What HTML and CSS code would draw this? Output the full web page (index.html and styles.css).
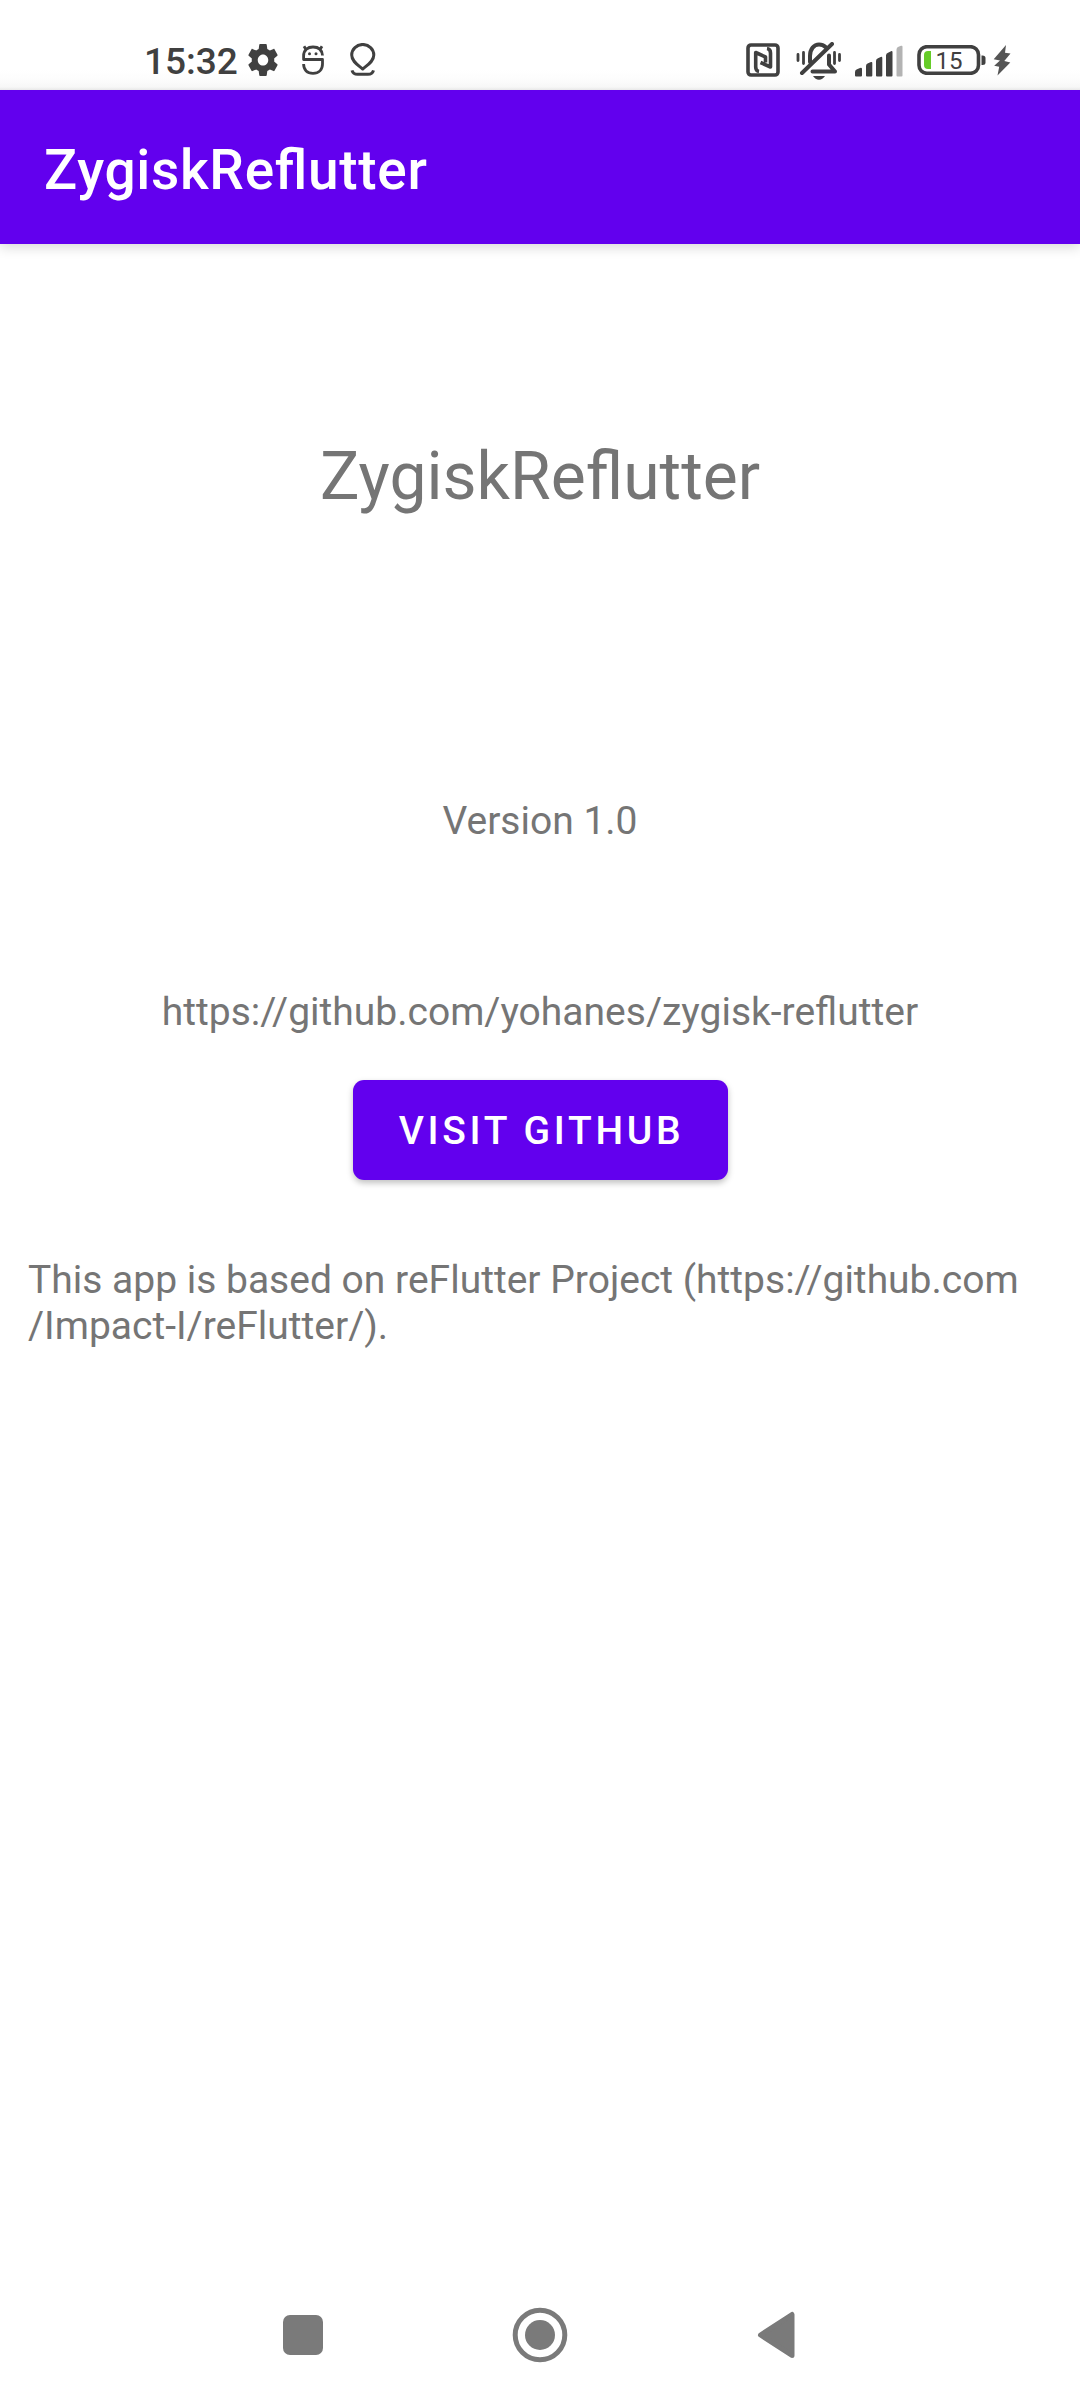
FILE: index.html
```html
<!DOCTYPE html>
<html lang="en">
<head>
<meta charset="utf-8">
<title>ZygiskReflutter</title>
<link rel="stylesheet" href="styles.css">
</head>
<body>
<div class="screen">
  <header class="status-bar">
    <div class="status-left">
      <span class="clock">15:32</span>
      <svg class="icon-gear" width="30" height="32" viewBox="2 2 20 20" preserveAspectRatio="none"><path d="M19.43 12.98c.04-.32.07-.64.07-.98s-.03-.66-.07-.98l2.11-1.65c.19-.15.24-.42.12-.64l-2-3.46c-.12-.22-.39-.3-.61-.22l-2.490 1c-.52-.4-1.080-.73-1.690-.98l-.38-2.650C14.460 2.180 14.250 2 14 2h-4c-.25 0-.46.18-.49.42l-.38 2.650c-.61.25-1.170.59-1.690.98l-2.490-1c-.23-.09-.49 0-.61.22l-2 3.460c-.13.22-.07.49.12.64l2.110 1.650c-.04.32-.07.65-.07.98s.03.66.07.98l-2.110 1.650c-.19.15-.24.42-.12.64l2 3.460c.12.22.39.3.61.22l2.490-1c.52.4 1.080.73 1.690.98l.38 2.650c.03.24.24.42.49.42h4c.25 0 .46-.18.49-.42l.38-2.650c.61-.25 1.170-.59 1.690-.98l2.490 1c.23.09.49 0 .61-.22l2-3.460c.12-.22.07-.49-.12-.64l-2.110-1.650zM12 15.500c-1.930 0-3.500-1.570-3.500-3.500s1.570-3.500 3.500-3.500 3.500 1.570 3.500 3.500-1.570 3.500-3.500 3.500z"/></svg>
      <svg class="icon-mask" width="22" height="32" viewBox="0 0 22 32"><path class="line" d="M20.500 11.500C20 5.500 16 3 11 3S1.600 5.500 1.600 12v3.500h18.900V20c0 5.800-3.700 9.300-9.500 9.300S1.600 26 1.600 20M4 5.500 2 2.300M18 5.500l2-3.200"/><circle cx="7.500" cy="9.700" r="1.500"/><circle cx="14" cy="9.700" r="1.500"/></svg>
      <svg class="icon-pin" width="26" height="34" viewBox="0 0 26 34"><path class="line" d="M12.700 26C8 22 1.700 18.500 1.700 12A11 10.500 0 0 1 23.800 12c0 6.500-6.300 10-11.100 14zM2 27.300c.8 2.800 2.500 4 5.500 4h10.500c3 0 4.700-1.200 5.500-4"/></svg>
    </div>
    <div class="status-right">
      <svg class="icon-nfc" width="34" height="34" viewBox="0 0 34 34"><rect class="line" x="2" y="2" width="30" height="30" rx="3"/><path class="line" d="M13 28.500Q9.700 28 9.700 24V9.500L19.500 14v5.500M21 5.500Q24.500 6 24.500 10V24L14.500 19.500"/></svg>
      <svg class="icon-bell" width="46" height="38" viewBox="0 0 46 38"><path class="line" d="M14 20v-6c0-7 4-11.500 9-11.500 3 0 5 1 6.500 2.500M16.500 29.500H39l-6-7V13.500"/><path class="line" d="M6 31 36 2"/><path class="thin" d="M2 12.500v6M7.500 10.500v11M38.500 10.500v11M43.500 12.500v6"/><path d="M17 34h12c-1.500 2.400-3.600 3.700-6 3.700s-4.500-1.300-6-3.700z"/></svg>
      <svg class="icon-signal" width="48" height="32" viewBox="0 0 48 32"><path d="M0 27q0-2 2-2.700l3-1.300q2-.7 2 1v6.500q0 1-1 1H1q-1 0-1-1zM11 21q0-2 2-2.700l3-1.300q1.300-.5 1.300 1v12.500q0 1-1 1H12q-1 0-1-1zM21 16q0-2 2-2.700l2.700-1.300q1.600-.6 1.600 1v17.500q0 1-1 1H22q-1 0-1-1zM31 10.500q0-2 2-2.700l3-1.500q1.500-.7 1.500 1v23.200q0 1-1 1H32q-1 0-1-1z"/><path class="faded" d="M41.500 4.500q0-2 2-2.700l2.500-1q1.500-.5 1.500 1v28.700q0 1-1 1h-4q-1 0-1-1z"/></svg>
      <svg class="icon-battery" width="70" height="30" viewBox="0 0 70 30"><rect class="line" x="2" y="1.700" width="59.500" height="26.600" rx="8"/><path class="charge" d="M14 6v18h-3q-4 0-4-4V10q0-4 4-4z"/><path d="M64.500 10.500h1q3 0 3 2.500v4.500q0 2.500-3 2.500h-1z"/><text class="level" x="18.500" y="23.800">15</text></svg>
      <svg class="icon-bolt" width="18" height="32" viewBox="0 0 18 32"><path d="M13 0 .7 14.300 7 15.500 1.200 20.800l5 1L4.500 30.500 17.300 17.600l-6-1.600 6.200-7.500-5.500-.8z"/></svg>
    </div>
  </header>
  <div class="app-bar"><h1 class="app-title">ZygiskReflutter</h1></div>
  <main class="content">
    <h2 class="headline">ZygiskReflutter</h2>
    <p class="version">Version 1.0</p>
    <p class="repo">https://github.com/yohanes/zygisk-reflutter</p>
    <button class="visit">VISIT GITHUB</button>
    <p class="credits">This app is based on reFlutter Project (https://github.com<br>/Impact-I/reFlutter/).</p>
  </main>
  <nav class="nav-bar">
    <svg width="60" height="60" viewBox="0 0 60 60"><rect x="10" y="10" width="40" height="40" rx="7"/></svg>
    <svg width="60" height="60" viewBox="0 0 60 60"><circle class="ring" cx="30" cy="30" r="24.800"/><circle cx="30" cy="30" r="15"/></svg>
    <svg width="60" height="60" viewBox="0 0 60 60"><path class="back" d="M13.500 30 45 9.500v41z"/></svg>
  </nav>
</div>
</body>
</html>
```
FILE: styles.css
```css
* { box-sizing: border-box; }
body { margin: 0; background: #fff; font-family: Roboto, sans-serif; }
h1, h2, p { margin: 0; }
.screen { width: 1080px; height: 2400px; display: flex; flex-direction: column; color: #757575; background: #fff; }
svg { display: block; flex: none; }

.status-bar { height: 90px; display: flex; justify-content: space-between; padding: 0 69px 0 144px; color: #404040; background: linear-gradient(#fff 0 70px, #fcfcfc 80px, #f7f7f7 87px, #e8e8e8 90px); }
.status-left, .status-right { display: flex; align-items: flex-start; fill: #404040; }
.clock { width: 104px; margin-top: 40px; font-size: 37px; line-height: 43px; font-weight: 500; white-space: nowrap; }
.icon-gear { margin-top: 44px; }
.icon-mask { margin: 44px 0 0 24px; }
.icon-pin { margin: 43px 0 0 26px; }
.icon-nfc { margin-top: 43px; }
.icon-bell { margin: 42px 0 0 16px; }
.icon-signal { margin: 45px 0 0 13px; }
.icon-battery { margin: 45px 0 0 14px; }
.icon-bolt { margin: 45px 0 0 6px; fill: #555; }
.line { fill: none; stroke: #404040; stroke-width: 3.6; stroke-linejoin: round; }
.icon-mask .line { stroke-width: 2.8; }
.icon-pin .line { stroke-width: 3; }
.icon-bell .line { stroke-width: 4; stroke-linecap: round; }
.thin { fill: none; stroke: #404040; stroke-width: 2.8; stroke-linecap: round; }
.faded { fill: #b3b3b3; }
.charge { fill: #66cc29; }
.level { font: 400 24px Roboto, sans-serif; }

.app-bar { height: 154px; display: flex; align-items: center; padding: 5px 44px 0; background: #6200ee; color: #fff; box-shadow: 0 3px 12px rgba(0,0,0,.16); clip-path: inset(0 0 -30px 0); }
.app-title { font-size: 55px; line-height: 64px; font-weight: 500; letter-spacing: .0125em; font-feature-settings: "liga" 1; }

.content { flex: 1; display: flex; flex-direction: column; align-items: center; font-size: 39px; line-height: 46px; }
.headline { margin-top: 194px; font-size: 66px; line-height: 78px; font-weight: 400; }
.version { margin-top: 282px; }
.repo { margin-top: 145px; }
.visit { width: 375px; height: 100px; margin-top: 45px; padding: 2px 0 0 3px; border: 0; border-radius: 11px; background: #6200ee; color: #fff; font: 500 39px/45px Roboto, sans-serif; letter-spacing: .0945em; box-shadow: 0 3px 6px rgba(0,0,0,.25); }
.credits { align-self: stretch; margin-top: 77px; padding-left: 28px; }

.nav-bar { height: 130px; display: flex; align-items: center; justify-content: center; gap: 177px; fill: #7a7a7a; }
.ring { fill: none; stroke: #7a7a7a; stroke-width: 5; }
.back { stroke: #7a7a7a; stroke-width: 5; stroke-linejoin: round; }
```
